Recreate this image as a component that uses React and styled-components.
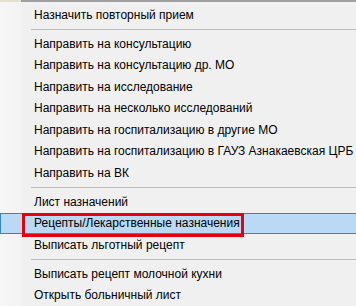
import React from 'react';
import styled, { createGlobalStyle } from 'styled-components';

const Global = createGlobalStyle`
  html, body {
    margin: 0;
    padding: 0;
    background: #f0f0f0;
  }
  body {
    font-family: "Liberation Sans", Arial, sans-serif;
  }
`;

const Menu = styled.div`
  width: 356px;
  height: 306px;
  overflow: hidden;
  box-sizing: border-box;
  padding-top: 2px;
  background: linear-gradient(to right, #f6f6f6 0, #f3f3f3 22px, #f0f0f0 22px);
  border-top: 2px solid;
  border-image: linear-gradient(to right, #e6e2c8 0, #e6e2c8 22px, #a0a0a0 22px) 1;
  display: flex;
  flex-direction: column;
`;

const Item = styled.div`
  position: relative;
  height: 21.5px;
  flex: none;
  display: flex;
  align-items: center;
  box-sizing: border-box;
  padding-left: 33px;
  font-size: 12px;
  color: #000;
  white-space: nowrap;
  background: ${p => (p.$active ? '#b9d9f4' : 'transparent')};
  border: 1px solid ${p => (p.$active ? '#2b86d8' : 'transparent')};
  border-right: none;
`;

const Marker = styled.div`
  position: absolute;
  left: 21px;
  top: -1px;
  width: 222px;
  height: 24px;
  border: 3px solid #e8000b;
  box-sizing: border-box;
  pointer-events: none;
`;

const Separator = styled.div`
  height: 7.5px;
  flex: none;
  display: flex;
  align-items: center;
  padding-left: 31px;

  &::after {
    content: '';
    flex: 1;
    height: 1px;
    background: #bdbdbd;
  }
`;

const groups = [
  ['Назначить повторный прием'],
  [
    'Направить на консультацию',
    'Направить на консультацию др. МО',
    'Направить на исследование',
    'Направить на несколько исследований',
    'Направить на госпитализацию в другие МО',
    'Направить на госпитализацию в ГАУЗ Азнакаевская ЦРБ',
    'Направить на ВК',
  ],
  ['Лист назначений', 'Рецепты/Лекарственные назначения', 'Выписать льготный рецепт'],
  ['Выписать рецепт молочной кухни', 'Открыть больничный лист'],
];

const ACTIVE = 'Рецепты/Лекарственные назначения';

export default function App() {
  return (
    <>
      <Global />
      <Menu>
        {groups.map((group, gi) => (
          <React.Fragment key={gi}>
            {gi > 0 && <Separator />}
            {group.map(text => (
              <Item key={text} $active={text === ACTIVE}>
                <span>{text}</span>
                {text === ACTIVE && <Marker />}
              </Item>
            ))}
          </React.Fragment>
        ))}
      </Menu>
    </>
  );
}
